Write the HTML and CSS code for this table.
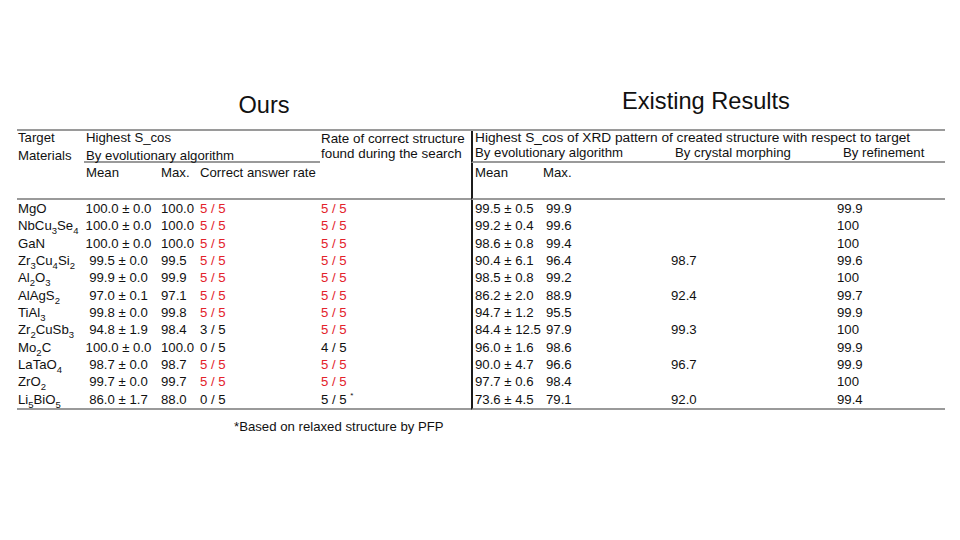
FILE: index.html
```html
<!DOCTYPE html>
<html>
<head>
<meta charset="utf-8">
<link rel="stylesheet" href="styles.css">
</head>
<body>
<div class="slide">
  <div class="titles">
    <h2 class="title t-ours">Ours</h2>
    <h2 class="title t-exist">Existing Results</h2>
  </div>
  <div class="grid">
    <div class="h h1 c1 ra">Target</div>
    <div class="h h1 ra lspan">Highest S_cos</div>
    <div class="h rate">Rate of correct structure<br>found during the search</div>
    <div class="h h1 ra rspan sep wide">Highest S_cos of XRD pattern of created structure with respect to target</div>

    <div class="h h2 c1 rb low">Materials</div>
    <div class="h h2 rb lspan low line">By evolutionary algorithm</div>
    <div class="h h2 rb revo sep line">By evolutionary algorithm</div>
    <div class="h h2 rb c8 hc8 line">By crystal morphing</div>
    <div class="h h2 rb c9 hc9 line">By refinement</div>

    <div class="h h3 rc c1 line"></div>
    <div class="h h3 rc c2 hmean line">Mean</div>
    <div class="h h3 rc c3 line">Max.</div>
    <div class="h h3 rc c4 line">Correct answer rate</div>
    <div class="h h3 rc c5 line"></div>
    <div class="h h3 rc c6 sep line">Mean</div>
    <div class="h h3 rc c7 hmax line">Max.</div>
    <div class="h h3 rc c8 line"></div>
    <div class="h h3 rc c9 line"></div>

    <div class="row">
      <div class="d c1">MgO</div><div class="d c2">100.0 ± 0.0</div><div class="d c3">100.0</div><div class="d c4 red">5 / 5</div><div class="d c5 red">5 / 5</div><div class="d c6 sep">99.5 ± 0.5</div><div class="d c7">99.9</div><div class="d c8"></div><div class="d c9">99.9</div>
    </div>
    <div class="row">
      <div class="d c1">NbCu<sub>3</sub>Se<sub>4</sub></div><div class="d c2">100.0 ± 0.0</div><div class="d c3">100.0</div><div class="d c4 red">5 / 5</div><div class="d c5 red">5 / 5</div><div class="d c6 sep">99.2 ± 0.4</div><div class="d c7">99.6</div><div class="d c8"></div><div class="d c9">100</div>
    </div>
    <div class="row">
      <div class="d c1">GaN</div><div class="d c2">100.0 ± 0.0</div><div class="d c3">100.0</div><div class="d c4 red">5 / 5</div><div class="d c5 red">5 / 5</div><div class="d c6 sep">98.6 ± 0.8</div><div class="d c7">99.4</div><div class="d c8"></div><div class="d c9">100</div>
    </div>
    <div class="row">
      <div class="d c1">Zr<sub>3</sub>Cu<sub>4</sub>Si<sub>2</sub></div><div class="d c2">99.5 ± 0.0</div><div class="d c3">99.5</div><div class="d c4 red">5 / 5</div><div class="d c5 red">5 / 5</div><div class="d c6 sep">90.4 ± 6.1</div><div class="d c7">96.4</div><div class="d c8">98.7</div><div class="d c9">99.6</div>
    </div>
    <div class="row">
      <div class="d c1">Al<sub>2</sub>O<sub>3</sub></div><div class="d c2">99.9 ± 0.0</div><div class="d c3">99.9</div><div class="d c4 red">5 / 5</div><div class="d c5 red">5 / 5</div><div class="d c6 sep">98.5 ± 0.8</div><div class="d c7">99.2</div><div class="d c8"></div><div class="d c9">100</div>
    </div>
    <div class="row">
      <div class="d c1">AlAgS<sub>2</sub></div><div class="d c2">97.0 ± 0.1</div><div class="d c3">97.1</div><div class="d c4 red">5 / 5</div><div class="d c5 red">5 / 5</div><div class="d c6 sep">86.2 ± 2.0</div><div class="d c7">88.9</div><div class="d c8">92.4</div><div class="d c9">99.7</div>
    </div>
    <div class="row">
      <div class="d c1">TiAl<sub>3</sub></div><div class="d c2">99.8 ± 0.0</div><div class="d c3">99.8</div><div class="d c4 red">5 / 5</div><div class="d c5 red">5 / 5</div><div class="d c6 sep">94.7 ± 1.2</div><div class="d c7">95.5</div><div class="d c8"></div><div class="d c9">99.9</div>
    </div>
    <div class="row">
      <div class="d c1">Zr<sub>2</sub>CuSb<sub>3</sub></div><div class="d c2">94.8 ± 1.9</div><div class="d c3">98.4</div><div class="d c4">3 / 5</div><div class="d c5 red">5 / 5</div><div class="d c6 sep">84.4 ± 12.5</div><div class="d c7">97.9</div><div class="d c8">99.3</div><div class="d c9">100</div>
    </div>
    <div class="row">
      <div class="d c1">Mo<sub>2</sub>C</div><div class="d c2">100.0 ± 0.0</div><div class="d c3">100.0</div><div class="d c4">0 / 5</div><div class="d c5">4 / 5</div><div class="d c6 sep">96.0 ± 1.6</div><div class="d c7">98.6</div><div class="d c8"></div><div class="d c9">99.9</div>
    </div>
    <div class="row">
      <div class="d c1">LaTaO<sub>4</sub></div><div class="d c2">98.7 ± 0.0</div><div class="d c3">98.7</div><div class="d c4 red">5 / 5</div><div class="d c5 red">5 / 5</div><div class="d c6 sep">90.0 ± 4.7</div><div class="d c7">96.6</div><div class="d c8">96.7</div><div class="d c9">99.9</div>
    </div>
    <div class="row">
      <div class="d c1">ZrO<sub>2</sub></div><div class="d c2">99.7 ± 0.0</div><div class="d c3">99.7</div><div class="d c4 red">5 / 5</div><div class="d c5 red">5 / 5</div><div class="d c6 sep">97.7 ± 0.6</div><div class="d c7">98.4</div><div class="d c8"></div><div class="d c9">100</div>
    </div>
    <div class="row last">
      <div class="d c1">Li<sub>5</sub>BiO<sub>5</sub></div><div class="d c2">86.0 ± 1.7</div><div class="d c3">88.0</div><div class="d c4">0 / 5</div><div class="d c5">5 / 5 <sup>*</sup></div><div class="d c6 sep">73.6 ± 4.5</div><div class="d c7">79.1</div><div class="d c8">92.0</div><div class="d c9">99.4</div>
    </div>
  </div>
  <p class="note">*Based on relaxed structure by PFP</p>
</div>
</body>
</html>
```

FILE: styles.css
```css
html, body {
  margin: 0;
  padding: 0;
  background: #ffffff;
}

body {
  font-family: "Liberation Sans", Arial, sans-serif;
  color: #111111;
}

.slide {
  width: 960px;
  height: 540px;
  overflow: hidden;
}

.titles {
  display: flex;
  height: 129px;
  padding-left: 17px;
  box-sizing: border-box;
}

.title {
  margin: 0;
  font-weight: normal;
  font-size: 23.6px;
  line-height: 28px;
  text-align: center;
  color: #111111;
}

.t-ours {
  width: 494px;
  margin-top: 91px;
}

.t-exist {
  width: 390px;
  margin-top: 87px;
}

.grid {
  display: grid;
  margin-left: 17px;
  width: 928px;
  grid-template-columns: 67px 72px 42px 122px 151px 72px 97px 190px 115px;
  grid-template-rows: 15px 17px 37px repeat(11, 17.33px) 19.33px;
  border-top: 2px solid #9a9a9a;
  font-size: 13.2px;
  white-space: nowrap;
}

.row {
  display: contents;
}

.h {
  line-height: 13px;
}

.ra { grid-row: 1; }
.rb { grid-row: 2; }
.rc { grid-row: 3; }

.c1 { grid-column: 1; padding-left: 1px; }
.c2 { grid-column: 2; }
.c3 { grid-column: 3; padding-left: 5px; }
.c4 { grid-column: 4; padding-left: 2px; }
.c5 { grid-column: 5; padding-left: 1px; }
.c6 { grid-column: 6; }
.c7 { grid-column: 7; padding-left: 3px; }
.c8 { grid-column: 8; padding-left: 31px; }
.c9 { grid-column: 9; padding-left: 7px; }

.lspan {
  grid-column: 2 / 5;
  padding-left: 2px;
}

.rspan {
  grid-column: 6 / 10;
}

.wide {
  font-size: 13.7px;
}

.revo {
  grid-column: 6 / 8;
}

.rate {
  grid-column: 5;
  grid-row: 1 / 3;
  padding-left: 1px;
  line-height: 15px;
  font-size: 13.4px;
}

.sep {
  border-left: 2px solid #1c1c1c;
  padding-left: 2px;
}

.line {
  border-bottom: 2px solid #9a9a9a;
}

.low {
  padding-top: 3px;
}

.h3 {
  padding-top: 3px;
}

.hmean {
  padding-left: 2px;
}

.hmax {
  padding-left: 0;
}

.hc8 {
  padding-left: 35px;
}

.hc9 {
  padding-left: 13px;
}

.d {
  line-height: 17.33px;
}

.d.c2 {
  text-align: center;
  padding-right: 3px;
}

.last .d {
  border-bottom: 2px solid #9a9a9a;
}

.last .d.c6 {
  border-left: 2px solid #1c1c1c;
}

.red {
  color: #e3232c;
}

sub {
  font-size: 9.5px;
  line-height: 0;
  vertical-align: -4px;
}

sup {
  font-size: 8px;
  line-height: 0;
  vertical-align: 6px;
}

.note {
  margin: 8px 0 0 234px;
  font-size: 13.2px;
  line-height: 17.33px;
}
```
